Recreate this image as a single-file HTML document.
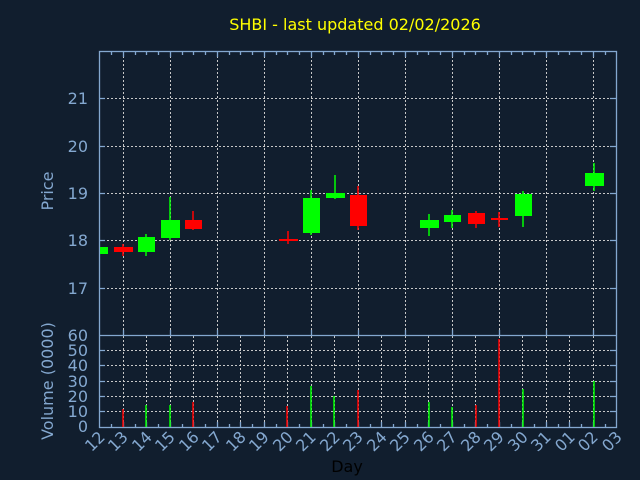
<!DOCTYPE html>
<html><head><style>
html,body{margin:0;padding:0;background:#111e2e;}
svg{display:block;font-family:"DejaVu Sans","Liberation Sans",sans-serif;}
</style></head><body>
<svg width="640" height="480" viewBox="0 0 640 480" xmlns="http://www.w3.org/2000/svg">
<rect width="640" height="480" fill="#111e2e"/>
<text x="355" y="30" fill="#ffff00" font-size="16" text-anchor="middle">SHBI - last updated 02/02/2026</text>
<g stroke="#c8c8c8" stroke-width="1" stroke-dasharray="2,2" fill="none">
<path d="M99 98.5H616M99 146.5H616M99 193.5H616M99 240.5H616M99 288.5H616"/>
<path d="M123.5 52V335M170.5 52V335M217.5 52V335M264.5 52V335M311.5 52V335M358.5 52V335M405.5 52V335M452.5 52V335M499.5 52V335M546.5 52V335M593.5 52V335"/>
<path d="M99 411.5H616M99 396.5H616M99 381.5H616M99 365.5H616M99 350.5H616"/>
<path d="M123.5 336V427M146.5 336V427M170.5 336V427M193.5 336V427M217.5 336V427M240.5 336V427M264.5 336V427M287.5 336V427M311.5 336V427M334.5 336V427M358.5 336V427M381.5 336V427M405.5 336V427M428.5 336V427M452.5 336V427M475.5 336V427M499.5 336V427M522.5 336V427M546.5 336V427M569.5 336V427M593.5 336V427"/>
</g>
<g stroke="#84a8d0" stroke-width="1.3" fill="none">
<rect x="99.5" y="51.5" width="517" height="376"/>
<path d="M99.5 335.5H616.5"/>
<path d="M99 98.5h6M99 146.5h6M99 193.5h6M99 240.5h6M99 288.5h6M616 98.5h-6M616 146.5h-6M616 193.5h-6M616 240.5h-6M616 288.5h-6"/>
<path d="M99 411.5h6M99 396.5h6M99 381.5h6M99 365.5h6M99 350.5h6M616 411.5h-6M616 396.5h-6M616 381.5h-6M616 365.5h-6M616 350.5h-6"/>
<path d="M123.5 52v5M170.5 52v5M217.5 52v5M264.5 52v5M311.5 52v5M358.5 52v5M405.5 52v5M452.5 52v5M499.5 52v5M546.5 52v5M593.5 52v5M111.5 52v3M135.5 52v3M146.5 52v3M158.5 52v3M182.5 52v3M193.5 52v3M205.5 52v3M229.5 52v3M240.5 52v3M252.5 52v3M276.5 52v3M287.5 52v3M299.5 52v3M323.5 52v3M334.5 52v3M346.5 52v3M370.5 52v3M381.5 52v3M393.5 52v3M417.5 52v3M428.5 52v3M440.5 52v3M464.5 52v3M475.5 52v3M487.5 52v3M511.5 52v3M522.5 52v3M534.5 52v3M558.5 52v3M569.5 52v3M581.5 52v3M605.5 52v3"/>
<path d="M123.5 335v-5M170.5 335v-5M217.5 335v-5M264.5 335v-5M311.5 335v-5M358.5 335v-5M405.5 335v-5M452.5 335v-5M499.5 335v-5M546.5 335v-5M593.5 335v-5"/>
<path d="M111.5 427v-3M123.5 427v-5M135.5 427v-3M146.5 427v-5M158.5 427v-3M170.5 427v-5M182.5 427v-3M193.5 427v-5M205.5 427v-3M217.5 427v-5M229.5 427v-3M240.5 427v-5M252.5 427v-3M264.5 427v-5M276.5 427v-3M287.5 427v-5M299.5 427v-3M311.5 427v-5M323.5 427v-3M334.5 427v-5M346.5 427v-3M358.5 427v-5M370.5 427v-3M381.5 427v-5M393.5 427v-3M405.5 427v-5M417.5 427v-3M428.5 427v-5M440.5 427v-3M452.5 427v-5M464.5 427v-3M475.5 427v-5M487.5 427v-3M499.5 427v-5M511.5 427v-3M522.5 427v-5M534.5 427v-3M546.5 427v-5M558.5 427v-3M569.5 427v-5M581.5 427v-3M593.5 427v-5M605.5 427v-3"/>
</g>
<g fill="#84a8d0" font-size="16" text-anchor="end">
<text x="88" y="104">21</text><text x="88" y="152">20</text><text x="88" y="199">19</text><text x="88" y="246">18</text><text x="88" y="294">17</text>
<text x="88" y="341">60</text><text x="88" y="356">50</text><text x="88" y="371">40</text><text x="88" y="387">30</text><text x="88" y="402">20</text><text x="88" y="417">10</text><text x="88" y="432">0</text>
</g>
<text transform="translate(53,191) rotate(-90)" fill="#84a8d0" font-size="16" text-anchor="middle">Price</text>
<text transform="translate(53,381) rotate(-90)" fill="#84a8d0" font-size="16" text-anchor="middle">Volume (0000)</text>
<g fill="#84a8d0" font-size="16" text-anchor="end">
<text transform="translate(106,438) rotate(-45)">12</text>
<text transform="translate(129,438) rotate(-45)">13</text>
<text transform="translate(153,438) rotate(-45)">14</text>
<text transform="translate(176,438) rotate(-45)">15</text>
<text transform="translate(200,438) rotate(-45)">16</text>
<text transform="translate(223,438) rotate(-45)">17</text>
<text transform="translate(247,438) rotate(-45)">18</text>
<text transform="translate(270,438) rotate(-45)">19</text>
<text transform="translate(294,438) rotate(-45)">20</text>
<text transform="translate(317,438) rotate(-45)">21</text>
<text transform="translate(341,438) rotate(-45)">22</text>
<text transform="translate(364,438) rotate(-45)">23</text>
<text transform="translate(388,438) rotate(-45)">24</text>
<text transform="translate(411,438) rotate(-45)">25</text>
<text transform="translate(435,438) rotate(-45)">26</text>
<text transform="translate(458,438) rotate(-45)">27</text>
<text transform="translate(482,438) rotate(-45)">28</text>
<text transform="translate(505,438) rotate(-45)">29</text>
<text transform="translate(529,438) rotate(-45)">30</text>
<text transform="translate(552,438) rotate(-45)">31</text>
<text transform="translate(576,438) rotate(-45)">01</text>
<text transform="translate(599,438) rotate(-45)">02</text>
<text transform="translate(623,438) rotate(-45)">03</text>
</g>
<text x="347" y="472" fill="#000" font-size="16" text-anchor="middle">Day</text>
<g stroke-width="1.5">
<path stroke="#ff0000" d="M123 427V409M193 427V402M287 427V406M358 427V390M476 427V405M499 427V339"/>
<path stroke="#00ff00" d="M146 427V405M170 427V405M311 427V386M334 427V396M429 427V402M452 427V407M523 427V389M594 427V381"/>
</g>
<g stroke-width="1.5">
<path stroke="#ff0000" d="M123 244V256M193 211V230M288 231V244M358 186V230M476 211V228M499 212V227"/>
<path stroke="#00ff00" d="M146 234V256M170 197V240M311 190V235M335 175V199M429 214V236M452 210V228M523 191V227M594 163V191"/>
</g>
<g fill="#ff0000">
<rect x="114" y="247" width="19" height="5"/>
<rect x="185" y="220" width="17" height="9"/>
<rect x="279" y="239" width="19" height="2"/>
<rect x="350" y="195" width="17" height="31"/>
<rect x="468" y="213" width="17" height="11"/>
<rect x="491" y="218" width="17" height="2"/>
</g>
<g fill="#00ff00">
<rect x="100" y="247" width="8" height="7"/>
<rect x="138" y="237" width="17" height="15"/>
<rect x="161" y="220" width="19" height="18"/>
<rect x="303" y="198" width="17" height="35"/>
<rect x="326" y="193" width="19" height="5"/>
<rect x="420" y="220" width="19" height="8"/>
<rect x="444" y="215" width="17" height="7"/>
<rect x="515" y="194" width="17" height="22"/>
<rect x="585" y="173" width="19" height="13"/>
</g>
</svg>
</body></html>
